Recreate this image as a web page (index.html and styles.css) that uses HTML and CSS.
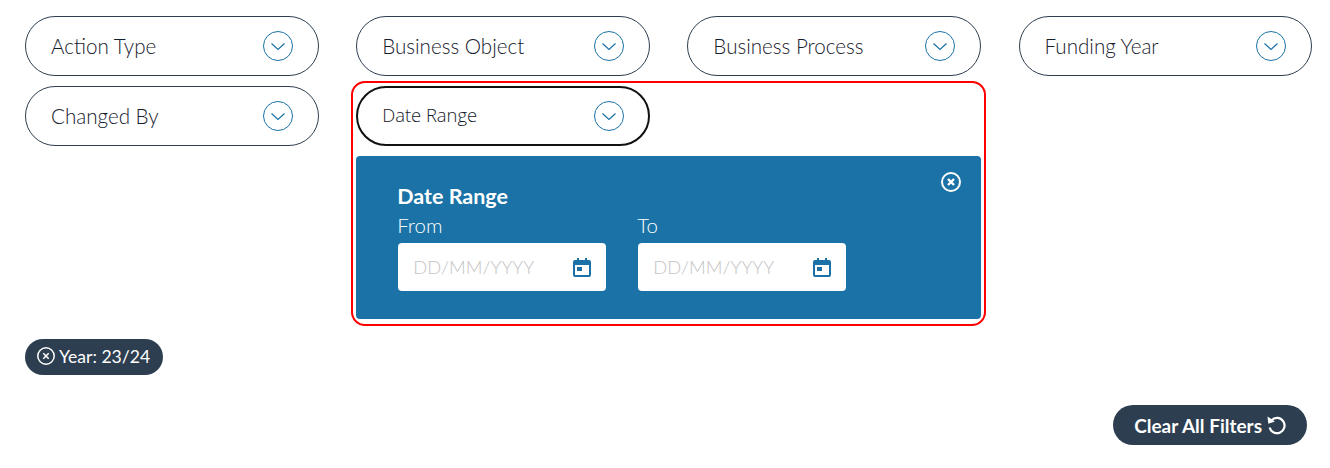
FILE: index.html
```html
<!DOCTYPE html>
<html lang="en">
<head>
<meta charset="utf-8">
<title>Filters</title>
<link rel="stylesheet" href="styles.css">
</head>
<body>
<svg class="sprite" width="0" height="0" aria-hidden="true">
  <symbol id="chev" viewBox="0 0 30 30"><circle cx="15" cy="15" r="14.5" fill="none" stroke="currentColor"/><path d="M8.5 12.5 15 18.5 21.5 12.5" fill="none" stroke="currentColor" stroke-width="1.2"/></symbol>
  <symbol id="cal" viewBox="0 0 18 19"><path fill-rule="evenodd" d="M4 0h2v2h6V0h2v2h2a2 2 0 0 1 2 2v13a2 2 0 0 1-2 2H2a2 2 0 0 1-2-2V4a2 2 0 0 1 2-2h2zM2 7v10h14V7zM4 9h5v4H4z"/></symbol>
  <symbol id="close" viewBox="0 0 20 20"><circle cx="10" cy="10" r="9" fill="none" stroke="currentColor" stroke-width="2"/><path d="M7 7l6 6M13 7l-6 6" fill="none" stroke="currentColor" stroke-width="2.4"/></symbol>
  <symbol id="close-thin" viewBox="0 0 18 18"><circle cx="9" cy="9" r="8.2" fill="none" stroke="currentColor" stroke-width="1.5"/><path d="M6.3 6.3l5.4 5.4M11.7 6.3l-5.4 5.4" fill="none" stroke="currentColor" stroke-width="1.6"/></symbol>
</svg>
<main class="page">
  <div class="filters">
    <button class="pill"><span class="pill-label">Action Type</span><svg class="chev"><use href="#chev"/></svg></button>
    <button class="pill"><span class="pill-label">Business Object</span><svg class="chev"><use href="#chev"/></svg></button>
    <button class="pill"><span class="pill-label">Business Process</span><svg class="chev"><use href="#chev"/></svg></button>
    <button class="pill"><span class="pill-label">Funding Year</span><svg class="chev"><use href="#chev"/></svg></button>
    <button class="pill"><span class="pill-label">Changed By</span><svg class="chev"><use href="#chev"/></svg></button>
    <section class="open-filter">
      <button class="pill pill-active"><span class="pill-label pill-label-active">Date Range</span><svg class="chev"><use href="#chev"/></svg></button>
      <div class="panel">
        <svg class="panel-close"><use href="#close"/></svg>
        <h2 class="panel-title">Date Range</h2>
        <div class="dates">
          <div class="date-field">
            <label class="date-label">From</label>
            <div class="date-input"><span class="placeholder">DD/MM/YYYY</span><svg class="cal"><use href="#cal"/></svg></div>
          </div>
          <div class="date-field">
            <label class="date-label">To</label>
            <div class="date-input"><span class="placeholder">DD/MM/YYYY</span><svg class="cal"><use href="#cal"/></svg></div>
          </div>
        </div>
      </div>
    </section>
  </div>
  <div class="chips">
    <span class="chip"><svg class="chip-x"><use href="#close-thin"/></svg>Year: 23/24</span>
  </div>
  <div class="actions">
    <button class="clear">Clear All Filters<svg class="undo" viewBox="0 0 20 20"><path d="M5.5 5.2A7.6 7.6 0 1 1 3.6 12.5" fill="none" stroke="currentColor" stroke-width="2.2"/><path d="M1.5 1.5l.8 7.2 6.6-2.2z" fill="currentColor"/></svg></button>
  </div>
</main>
</body>
</html>
```
FILE: styles.css
```css
* { box-sizing: border-box; }
html, body { margin: 0; padding: 0; background: #fff; }
body { font-family: "Lato", "Open Sans", sans-serif; color: #2c3e50; overflow: hidden; }
.sprite { position: absolute; }
.page { padding: 16px 17.6px 0 25px; }
.filters {
  display: grid;
  grid-template-columns: repeat(4, 1fr);
  column-gap: 37.33px;
  row-gap: 10px;
  align-items: start;
}
.pill {
  display: flex;
  align-items: center;
  justify-content: space-between;
  width: 100%;
  height: 60px;
  padding: 0 25px 0 26px;
  border: 1px solid #2c3e50;
  border-radius: 30px;
  background: #fff;
  color: #15202c;
  font: 300 20.6px "Lato", sans-serif;
}
.pill-label { margin: -1px 0 0 -1px; }
.pill-label-active { margin: -3px 0 0 -1px; font: 300 18.4px "Open Sans", sans-serif; }
.pill-active { width: 294px; border: 2px solid #111; padding: 0 24px 0 25px; }
.chev { width: 30px; height: 30px; color: #1a72a6; flex: none; }
.open-filter {
  grid-column: 2 / 4;
  margin: -5px -5px 0;
  padding: 3px 3px 5px;
  border: 2px solid #f00;
  border-radius: 14px;
}
.panel {
  position: relative;
  margin-top: 10px;
  height: 163px;
  padding: 27px 42px 0;
  background: #1a72a6;
  border-radius: 4px;
  color: #fff;
}
.panel-close { position: absolute; top: 16px; right: 20px; width: 20px; height: 20px; color: #fff; }
.panel-title { margin: 0 0 0 -1px; font-size: 21.5px; line-height: 26px; font-weight: 700; }
.dates { display: flex; gap: 32px; margin-top: 5px; }
.date-field { width: 208px; }
.date-label { display: block; height: 29px; margin-left: -1px; font-size: 20.5px; line-height: 22px; font-weight: 300; }
.date-input {
  display: flex;
  align-items: center;
  justify-content: space-between;
  height: 48px;
  padding: 0 15px 0 15px;
  background: #fff;
  border-radius: 4px;
}
.placeholder { font-size: 18.4px; font-weight: 300; color: #c4c4c4; }
.cal { width: 18px; height: 19px; fill: #1a72a6; }
.chips { display: flex; margin-top: 13px; }
.chip {
  display: inline-flex;
  align-items: center;
  gap: 4px;
  height: 36px;
  padding: 0 13px 2px 12px;
  border-radius: 18px;
  background: #2c3e50;
  color: #fff;
  font-size: 17.6px;
}
.chip-x { width: 18px; height: 18px; color: #fff; margin-top: -1px; }
.actions { display: flex; justify-content: flex-end; margin-top: 30px; padding-right: 5.4px; }
.clear {
  display: inline-flex;
  align-items: center;
  gap: 4px;
  height: 40px;
  padding: 0 21px 0 21.6px;
  border: 0;
  border-radius: 20px;
  background: #2c3e50;
  color: #fff;
  font: 700 19px "Lato", sans-serif;
}
.undo { width: 20px; height: 20px; }
```
